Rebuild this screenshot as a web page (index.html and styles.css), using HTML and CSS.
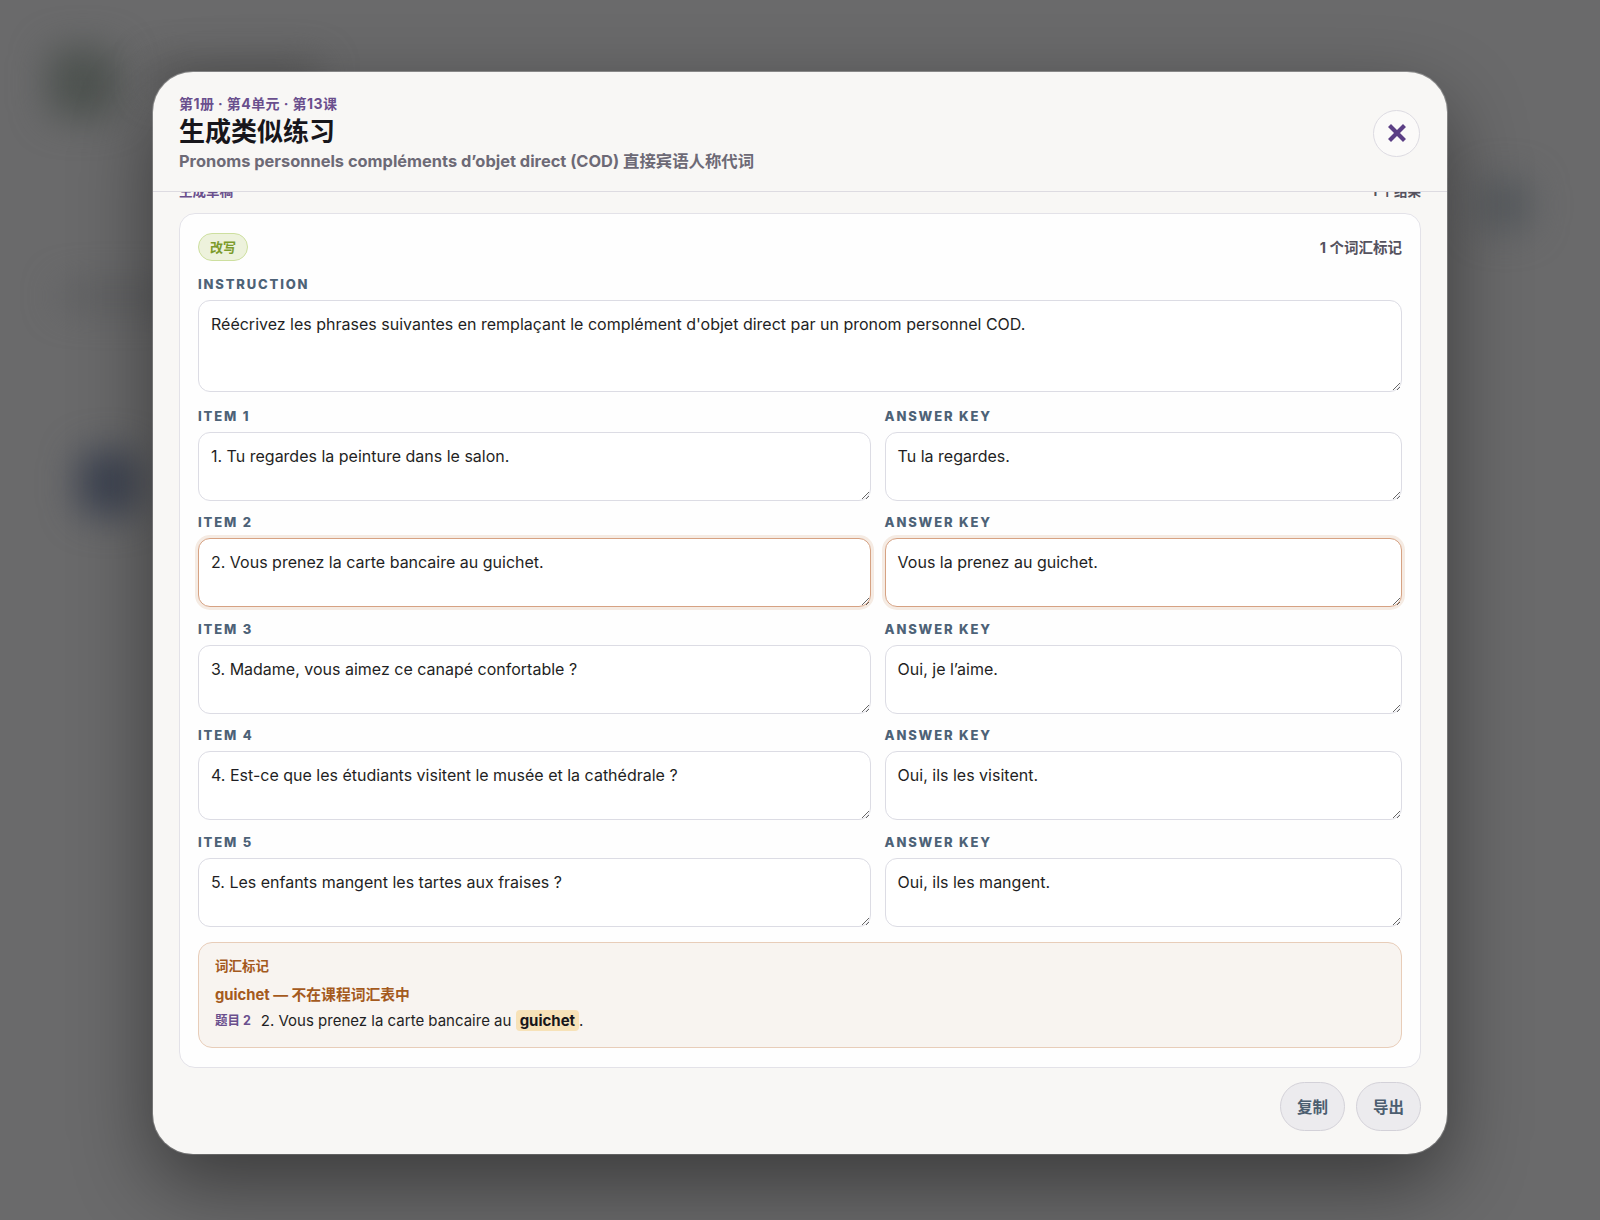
FILE: index.html
```html
<!DOCTYPE html>
<html lang="zh-CN">
<head>
    <meta charset="utf-8">
    <title>生成类似练习</title>
    <link rel="stylesheet" href="styles.css">
</head>
<body>
    <div class="backdrop">
        <div class="blob blob-logo"></div>
        <div class="blob blob-title"></div>
        <div class="blob blob-avatar"></div>
        <div class="blob blob-side"></div>
        <div class="blob blob-line"></div>
    </div>

    <div class="overlay">
        <div class="modal">
            <div class="modal-head">
                <div class="head-text">
                    <div class="crumb">第1册 · 第4单元 · 第13课</div>
                    <h1>生成类似练习</h1>
                    <div class="subtitle">Pronoms personnels compléments d’objet direct (COD) 直接宾语人称代词</div>
                </div>
                <button class="close-btn" aria-label="关闭">
                    <svg width="18" height="18" viewBox="0 0 18 18">
                        <path d="M3 3 L15 15 M15 3 L3 15" stroke="#5b3f85" stroke-width="4.2" stroke-linecap="square"/>
                    </svg>
                </button>
            </div>

            <div class="modal-body">
                <div class="scroll">
                    <div class="draft-row">
                        <span class="draft-label">生成草稿</span>
                        <span class="draft-count">1 个结果</span>
                    </div>

                    <div class="card">
                        <div class="card-top">
                            <span class="badge">改写</span>
                            <span class="flag-count">1 个词汇标记</span>
                        </div>

                        <div class="field">
                            <label>Instruction</label>
                            <textarea class="ta ta-big">Réécrivez les phrases suivantes en remplaçant le complément d'objet direct par un pronom personnel COD.</textarea>
                        </div>

                        <div class="items">
                            <div class="field">
                                <label>Item 1</label>
                                <textarea class="ta">1. Tu regardes la peinture dans le salon.</textarea>
                            </div>
                            <div class="field">
                                <label>Answer key</label>
                                <textarea class="ta">Tu la regardes.</textarea>
                            </div>

                            <div class="field">
                                <label>Item 2</label>
                                <textarea class="ta flagged">2. Vous prenez la carte bancaire au guichet.</textarea>
                            </div>
                            <div class="field">
                                <label>Answer key</label>
                                <textarea class="ta flagged">Vous la prenez au guichet.</textarea>
                            </div>

                            <div class="field">
                                <label>Item 3</label>
                                <textarea class="ta">3. Madame, vous aimez ce canapé confortable ?</textarea>
                            </div>
                            <div class="field">
                                <label>Answer key</label>
                                <textarea class="ta">Oui, je l’aime.</textarea>
                            </div>

                            <div class="field">
                                <label>Item 4</label>
                                <textarea class="ta">4. Est-ce que les étudiants visitent le musée et la cathédrale ?</textarea>
                            </div>
                            <div class="field">
                                <label>Answer key</label>
                                <textarea class="ta">Oui, ils les visitent.</textarea>
                            </div>

                            <div class="field">
                                <label>Item 5</label>
                                <textarea class="ta">5. Les enfants mangent les tartes aux fraises ?</textarea>
                            </div>
                            <div class="field">
                                <label>Answer key</label>
                                <textarea class="ta">Oui, ils les mangent.</textarea>
                            </div>
                        </div>

                        <div class="vocab">
                            <div class="vocab-title">词汇标记</div>
                            <div class="vocab-word">guichet — 不在课程词汇表中</div>
                            <div class="vocab-line">
                                <span class="vocab-ref">题目 2</span>
                                <span>2. Vous prenez la carte bancaire au <mark>guichet</mark>.</span>
                            </div>
                        </div>
                    </div>
                </div>
            </div>

            <div class="modal-foot">
                <button class="btn">复制</button>
                <button class="btn">导出</button>
            </div>
        </div>
    </div>
</body>
</html>
```

FILE: styles.css
```css
* {
    box-sizing: border-box;
}
html, body {
    margin: 0;
    height: 100%;
}
body {
    font-family: Inter, "Noto Sans CJK SC", sans-serif;
    background: #6a6a6b;
    color: #1f1f24;
    overflow: hidden;
    position: relative;
}

/* blurred page behind the dialog */
.backdrop {
    position: absolute;
    inset: 0;
    overflow: hidden;
}
.blob {
    position: absolute;
    filter: blur(18px);
}
.blob-logo {
    left: 48px;
    top: 48px;
    width: 70px;
    height: 70px;
    border-radius: 16px;
    background: #4d524f;
}
.blob-title {
    left: 150px;
    top: 62px;
    width: 170px;
    height: 28px;
    border-radius: 10px;
    background: #575757;
}
.blob-avatar {
    left: 78px;
    top: 450px;
    width: 62px;
    height: 66px;
    border-radius: 18px;
    background: #3d4351;
}
.blob-side {
    left: 1480px;
    top: 180px;
    width: 50px;
    height: 50px;
    border-radius: 14px;
    background: #55595d;
}
.blob-line {
    left: 60px;
    top: 285px;
    width: 120px;
    height: 22px;
    border-radius: 8px;
    background: #5d5e60;
}

.overlay {
    position: relative;
    height: 100%;
    display: flex;
    align-items: center;
    justify-content: center;
    padding-top: 5px;
}

.modal {
    width: 1294px;
    height: 1082px;
    background: #f8f7f5;
    border-radius: 40px;
    box-shadow: 0 30px 80px rgba(0, 0, 0, 0.45), 0 0 0 1px rgba(255, 255, 255, 0.3);
    display: flex;
    flex-direction: column;
    overflow: hidden;
}

.modal-head {
    display: flex;
    justify-content: space-between;
    align-items: center;
    padding: 23px 27px 19px 26px;
    border-bottom: 1px solid #dddbe1;
}
.crumb {
    font-size: 14px;
    font-weight: 700;
    letter-spacing: 0.03em;
    color: #6a4f8d;
    line-height: 18px;
}
h1 {
    margin: 0;
    font-size: 26px;
    line-height: 38px;
    font-weight: 700;
    color: #17161b;
}
.subtitle {
    font-size: 16.4px;
    font-weight: 700;
    color: #6d6a76;
    line-height: 21px;
}
.close-btn {
    width: 47px;
    height: 47px;
    border-radius: 50%;
    border: 1px solid #dcdae1;
    background: #fbfaf9;
    display: flex;
    align-items: center;
    justify-content: center;
    padding: 0;
    cursor: pointer;
}

.modal-body {
    flex: 1;
    overflow: hidden;
    padding: 0 26px;
}
.scroll {
    margin-top: -9px;
}
.draft-row {
    display: flex;
    justify-content: space-between;
    font-size: 13.5px;
    font-weight: 700;
    line-height: 16px;
    margin-bottom: 14px;
}
.draft-label {
    color: #6a4f8d;
}
.draft-count {
    color: #55525e;
}

.card {
    background: #fefefe;
    border: 1px solid #e3e2e8;
    border-radius: 16px;
    padding: 19px 18px 19px 18px;
    display: flex;
    flex-direction: column;
    gap: 15px;
}
.card-top {
    display: flex;
    justify-content: space-between;
    align-items: center;
}
.badge {
    font-size: 13px;
    font-weight: 700;
    color: #7c9b2b;
    background: #edf2dc;
    border: 1px solid #cddf9f;
    border-radius: 999px;
    padding: 5px 11px;
    line-height: 16px;
}
.flag-count {
    font-size: 14.5px;
    font-weight: 700;
    color: #55525e;
}

.field {
    display: flex;
    flex-direction: column;
    gap: 8px;
}
.field label {
    font-size: 13px;
    font-weight: 800;
    text-transform: uppercase;
    letter-spacing: 0.14em;
    color: #4d6277;
    line-height: 16px;
}
.ta {
    font-family: Inter, "Noto Sans CJK SC", sans-serif;
    font-size: 16px;
    line-height: 22px;
    color: #1f1f24;
    background: #fff;
    border: 1px solid #dcdce4;
    border-radius: 12px;
    padding: 12px 12px;
    height: 69px;
    width: 100%;
    resize: vertical;
    outline: none;
}
.ta-big {
    height: 92px;
}
.ta.flagged {
    border-color: #d6a283;
    box-shadow: 0 0 0 3px #f5ebe3;
}

.items {
    display: grid;
    grid-template-columns: 1.3fr 1fr;
    column-gap: 14px;
    row-gap: 13.5px;
    margin-top: 1px;
}

.vocab {
    background: #f8f4f0;
    border: 1px solid #e8cdb9;
    border-radius: 14px;
    padding: 15px 16px 15px 16px;
}
.vocab-title {
    font-size: 13.5px;
    font-weight: 700;
    color: #a45a1d;
    line-height: 17px;
    margin-bottom: 10px;
}
.vocab-word {
    font-size: 14.8px;
    font-weight: 700;
    color: #a45a1d;
    line-height: 20px;
    margin-bottom: 5px;
}
.vocab-line {
    font-size: 15px;
    line-height: 22px;
    display: flex;
    align-items: center;
    gap: 10px;
}
.vocab-ref {
    font-size: 12.5px;
    font-weight: 700;
    color: #6a4f8d;
}
mark {
    background: #f7e2b8;
    color: #17161b;
    font-weight: 700;
    padding: 1px 4px;
    border-radius: 4px;
}

.modal-foot {
    display: flex;
    justify-content: flex-end;
    gap: 11px;
    padding: 14px 26px 23px 26px;
}
.btn {
    font-family: Inter, "Noto Sans CJK SC", sans-serif;
    font-size: 15.5px;
    font-weight: 700;
    color: #4c5e70;
    background: #ecebee;
    border: 1px solid #d3d1d8;
    border-radius: 999px;
    height: 49px;
    padding: 0 16px;
    cursor: pointer;
}
```
